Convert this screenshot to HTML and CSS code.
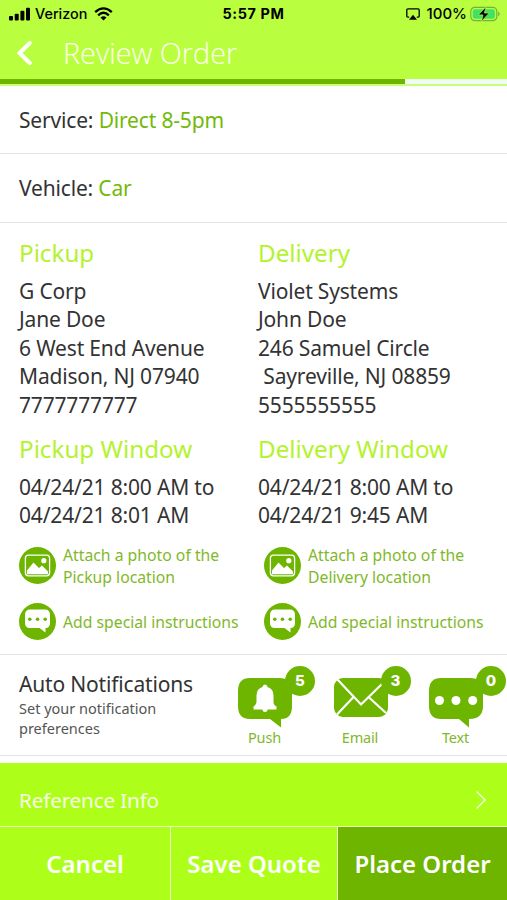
FILE: index.html
```html
<!DOCTYPE html>
<html lang="en">
<head>
<meta charset="utf-8">
<title>Review Order</title>
<link rel="stylesheet" href="styles.css">
</head>
<body>
<svg class="defs" width="0" height="0">
  <symbol id="photo" viewBox="0 0 37 37">
    <circle cx="18.5" cy="18.5" r="18.5" fill="#6eb500"/>
    <rect x="6.4" y="8.2" width="24.2" height="20.6" rx="3" fill="none" stroke="#fff" stroke-width="1.3"/>
    <path d="M8 27.2V23.5L14.5 15.5L20 21L23 18.5L29 24.5V27.2Z" fill="#fff"/>
    <circle cx="24.8" cy="13.7" r="2.6" fill="#fff"/>
  </symbol>
  <symbol id="note" viewBox="0 0 37 37">
    <circle cx="18.5" cy="18.5" r="18.5" fill="#6eb500"/>
    <path d="M11 6.5H26Q31 6.5 31 12V20Q31 25 26.5 25V29.5L20.5 25H11Q6 25 6 20V12Q6 6.5 11 6.5Z" fill="#fff"/>
    <g fill="#6eb500"><circle cx="10.8" cy="16.3" r="1.8"/><circle cx="18.5" cy="16.3" r="1.8"/><circle cx="26.2" cy="16.3" r="1.8"/></g>
  </symbol>
</svg>
<header class="header">
  <div class="status">
    <div class="carrier">
      <svg width="22" height="14" viewBox="0 0 22 14"><rect x="0" y="9" width="4" height="4.5" rx="1"/><rect x="5.7" y="6.7" width="4" height="6.8" rx="1"/><rect x="11.4" y="3.7" width="4" height="9.8" rx="1"/><rect x="17" y="0.7" width="4" height="12.8" rx="1"/></svg>
      <span class="carrier-name">Verizon</span>
      <svg width="19" height="14" viewBox="0 0 19 14"><g fill="none" stroke="#000" stroke-width="2.3"><path d="M1.2 5.2Q9.5 -2.4 17.8 5.2"/><path d="M4.1 8.3Q9.5 3.3 14.9 8.3"/></g><path d="M6.5 10.5Q9.5 8 12.5 10.5L9.5 13.6Z"/></svg>
    </div>
    <div class="clock">5:57 PM</div>
    <div class="power">
      <svg class="airplay" width="14" height="12" viewBox="0 0 14 12"><path d="M3.2 9.2H2Q.8 9.2 .8 8V2Q.8 .8 2 .8H12Q13.2 .8 13.2 2V8Q13.2 9.2 12 9.2H10.8" fill="none" stroke="#000" stroke-width="1.3"/><path d="M7 6.8L11 11.7H3Z"/></svg>
      <span class="percent">100%</span>
      <svg width="31" height="16" viewBox="0 0 31 16"><rect x=".8" y="1.3" width="26" height="13.4" rx="4" fill="none" stroke="#78af38" stroke-width="1.2"/><rect x="2.7" y="3.2" width="22.2" height="9.6" rx="2.4" fill="#3ee269"/><path d="M28.2 5.5Q31.3 8 28.2 10.5Z" fill="#78af38"/><path d="M16 .7L8.3 8.9H13L11.5 15.3L19.3 7H14.4Z" stroke="#b9ff40" stroke-width=".7"/></svg>
    </div>
  </div>
  <div class="titlebar">
    <svg width="18" height="26" viewBox="0 0 18 26"><path d="M14.8 3L4.6 13L14.8 23" fill="none" stroke="#fff" stroke-width="4" stroke-linecap="round"/></svg>
    <h1 class="title">Review Order</h1>
  </div>
  <div class="progress"><div class="progress-fill"></div></div>
</header>
<main>
  <div class="row service"><span class="body">Service: <b>Direct 8-5pm</b></span></div>
  <div class="row vehicle"><span class="body">Vehicle: <b>Car</b></span></div>
  <div class="stops">
    <section class="stop">
      <h2>Pickup</h2>
      <p class="lines">G Corp<br>Jane Doe<br>6 West End Avenue<br>Madison, NJ 07940<br>7777777777</p>
      <h2 class="window">Pickup Window</h2>
      <p class="lines times">04/24/21 8:00 AM to<br>04/24/21 8:01 AM</p>
      <div class="action photo"><svg width="37" height="37"><use href="#photo"/></svg><span>Attach a photo of the<br>Pickup location</span></div>
      <div class="action"><svg width="37" height="37"><use href="#note"/></svg><span>Add special instructions</span></div>
    </section>
    <section class="stop delivery">
      <h2>Delivery</h2>
      <p class="lines">Violet Systems<br>John Doe<br>246 Samuel Circle<br>&nbsp;Sayreville, NJ 08859<br>5555555555</p>
      <h2 class="window">Delivery Window</h2>
      <p class="lines times">04/24/21 8:00 AM to<br>04/24/21 9:45 AM</p>
      <div class="action photo"><svg width="37" height="37"><use href="#photo"/></svg><span>Attach a photo of the<br>Delivery location</span></div>
      <div class="action"><svg width="37" height="37"><use href="#note"/></svg><span>Add special instructions</span></div>
    </section>
  </div>
  <section class="notify">
    <div class="notify-text">
      <div class="body">Auto Notifications</div>
      <p>Set your notification<br>preferences</p>
    </div>
    <div class="channel">
      <svg width="55" height="50" viewBox="0 0 55 50"><path d="M12 0H41Q54 0 54 13V28Q54 41 43 41V49.5L32 41H12Q0 41 0 28V13Q0 0 12 0Z" fill="#6eb500"/><path d="M27 6.5Q29.3 6.5 29.5 9Q35.5 10.8 35.5 17.5V24Q35.5 27 38.5 28.5V31.5H29.7Q29.3 34 27 34T24.3 31.5H15.5V28.5Q18.5 27 18.5 24V17.5Q18.5 10.8 24.5 9Q24.7 6.5 27 6.5Z" fill="#fff"/></svg>
      <span class="badge">5</span><span class="label">Push</span>
    </div>
    <div class="channel">
      <svg width="55" height="50" viewBox="0 0 55 50"><rect width="54" height="39" rx="9" fill="#6eb500"/><path d="M3 1L27 26.5L51 3M3 36.5L19.5 19M52 35L34.5 19" fill="none" stroke="#fff" stroke-width="2.2"/></svg>
      <span class="badge">3</span><span class="label">Email</span>
    </div>
    <div class="channel">
      <svg width="55" height="50" viewBox="0 0 55 50"><path d="M12 0H41Q54 0 54 13V28Q54 41 40 41V49.5L30 41H12Q0 41 0 28V13Q0 0 12 0Z" fill="#6eb500"/><g fill="#fff"><circle cx="10.5" cy="22.5" r="4.5"/><circle cx="27" cy="22.5" r="4.5"/><circle cx="43.7" cy="22.5" r="4.5"/></g></svg>
      <span class="badge">0</span><span class="label">Text</span>
    </div>
  </section>
  <div class="reference"><span>Reference Info</span><svg width="12" height="20" viewBox="0 0 12 20"><path d="M1.5 1.5L10.2 10L1.5 18.5" fill="none" stroke="#f3ffd9" stroke-width="1.5"/></svg></div>
</main>
<footer class="buttons"><div>Cancel</div><div class="save">Save Quote</div><div class="place">Place Order</div></footer>
</body>
</html>
```

FILE: styles.css
```css
* { box-sizing: border-box; }
body { margin: 0; width: 507px; height: 900px; overflow: hidden; background: #fff; color: #333; font-family: "Noto Sans", sans-serif; font-size: 21px; letter-spacing: -.17px; }
h1, h2, p { margin: 0; font-weight: 400; }
svg { display: block; flex: none; }
.defs { position: absolute; }
.header { height: 86px; background: #b9ff40; border-bottom: 2px solid #caff76; letter-spacing: 0; }
.status { display: grid; grid-template-columns: 1fr 80px 1fr; height: 27px; align-items: center; color: #000; font-family: Inter, sans-serif; font-size: 14.4px; font-weight: 500; }
.carrier { display: flex; align-items: center; padding-left: 9px; }
.carrier-name { margin: 0 6px 0 4px; width: 53px; }
.clock { text-align: center; font-weight: 700; letter-spacing: .6px; white-space: nowrap; }
.power { display: flex; align-items: center; justify-content: flex-end; padding-right: 6px; }
.airplay { margin-right: 7px; }
.percent { margin-right: 3px; font-size: 15px; }
.titlebar { height: 52px; padding-left: 15px; display: flex; align-items: center; }
.title { margin-left: 30px; color: #fffff0; font-family: "Open Sans", sans-serif; font-weight: 300; font-size: 28.8px; line-height: 50px; }
.progress { height: 5px; background: #effbf5; }
.progress-fill { width: 405px; height: 5px; background: #6eb500; }
.row { display: flex; align-items: center; padding: 0 0 0 19px; border-bottom: 1px solid #e4e4e4; }
.service { height: 68px; }
.vehicle { height: 69px; }
.row b { color: #73b90a; font-weight: 400; }
.stops { display: grid; grid-template-columns: 239px 1fr; height: 431px; padding: 13px 0 0 19px; }
h2 { height: 34px; color: #b2f32d; font-size: 24.2px; line-height: 34px; letter-spacing: 0; white-space: nowrap; }
.lines { height: 142.5px; margin-top: 6.5px; line-height: 28.5px; white-space: nowrap; }
.window { margin-top: 13px; }
.lines.times { height: 57px; }
.action { display: flex; align-items: center; height: 37px; gap: 7px; color: #7fb82a; font-size: 15.75px; line-height: 22px; letter-spacing: 0; white-space: nowrap; }
.action span { padding-top: 2px; }
.action.photo { margin: 17px 0 19px; }
.delivery .action { margin-left: 6px; }
.notify { display: flex; height: 102px; border-top: 1px solid #e4e4e4; border-bottom: 1px solid #e4e4e4; padding: 1px 0 0 19px; }
.notify-text { width: 219px; flex: none; padding-top: 14px; line-height: 28px; white-space: nowrap; }
.notify-text p { color: #555; font-size: 14.5px; line-height: 20px; letter-spacing: 0; }
.channel { position: relative; width: 95.5px; padding-top: 22px; flex: none; }
.badge { position: absolute; left: 47px; top: 10px; width: 30px; height: 30px; border-radius: 50%; background: #6eb500; color: #fff; font: 800 15px/30px Inter, sans-serif; letter-spacing: 0; text-align: center; }
.label { display: block; width: 53px; margin-top: -1px; color: #7fb82a; font-size: 14.5px; line-height: 20px; text-align: center; }
.reference { display: flex; align-items: center; justify-content: space-between; height: 63px; margin-top: 7px; padding: 10px 20px 0 19px; background: #adff19; color: #f8ffe5; font-size: 20.7px; }
.buttons { display: grid; grid-template-columns: 170px 168px 169px; height: 74px; border-top: 1px solid #e8ffc1; background: #adff19; color: #fff; font-size: 24px; font-weight: 600; line-height: 74px; letter-spacing: 0; text-align: center; white-space: nowrap; }
.buttons .save { border-left: 1px solid #e8ffc1; border-right: 1px solid #e8ffc1; }
.buttons .place { background: #6eb500; }
```
